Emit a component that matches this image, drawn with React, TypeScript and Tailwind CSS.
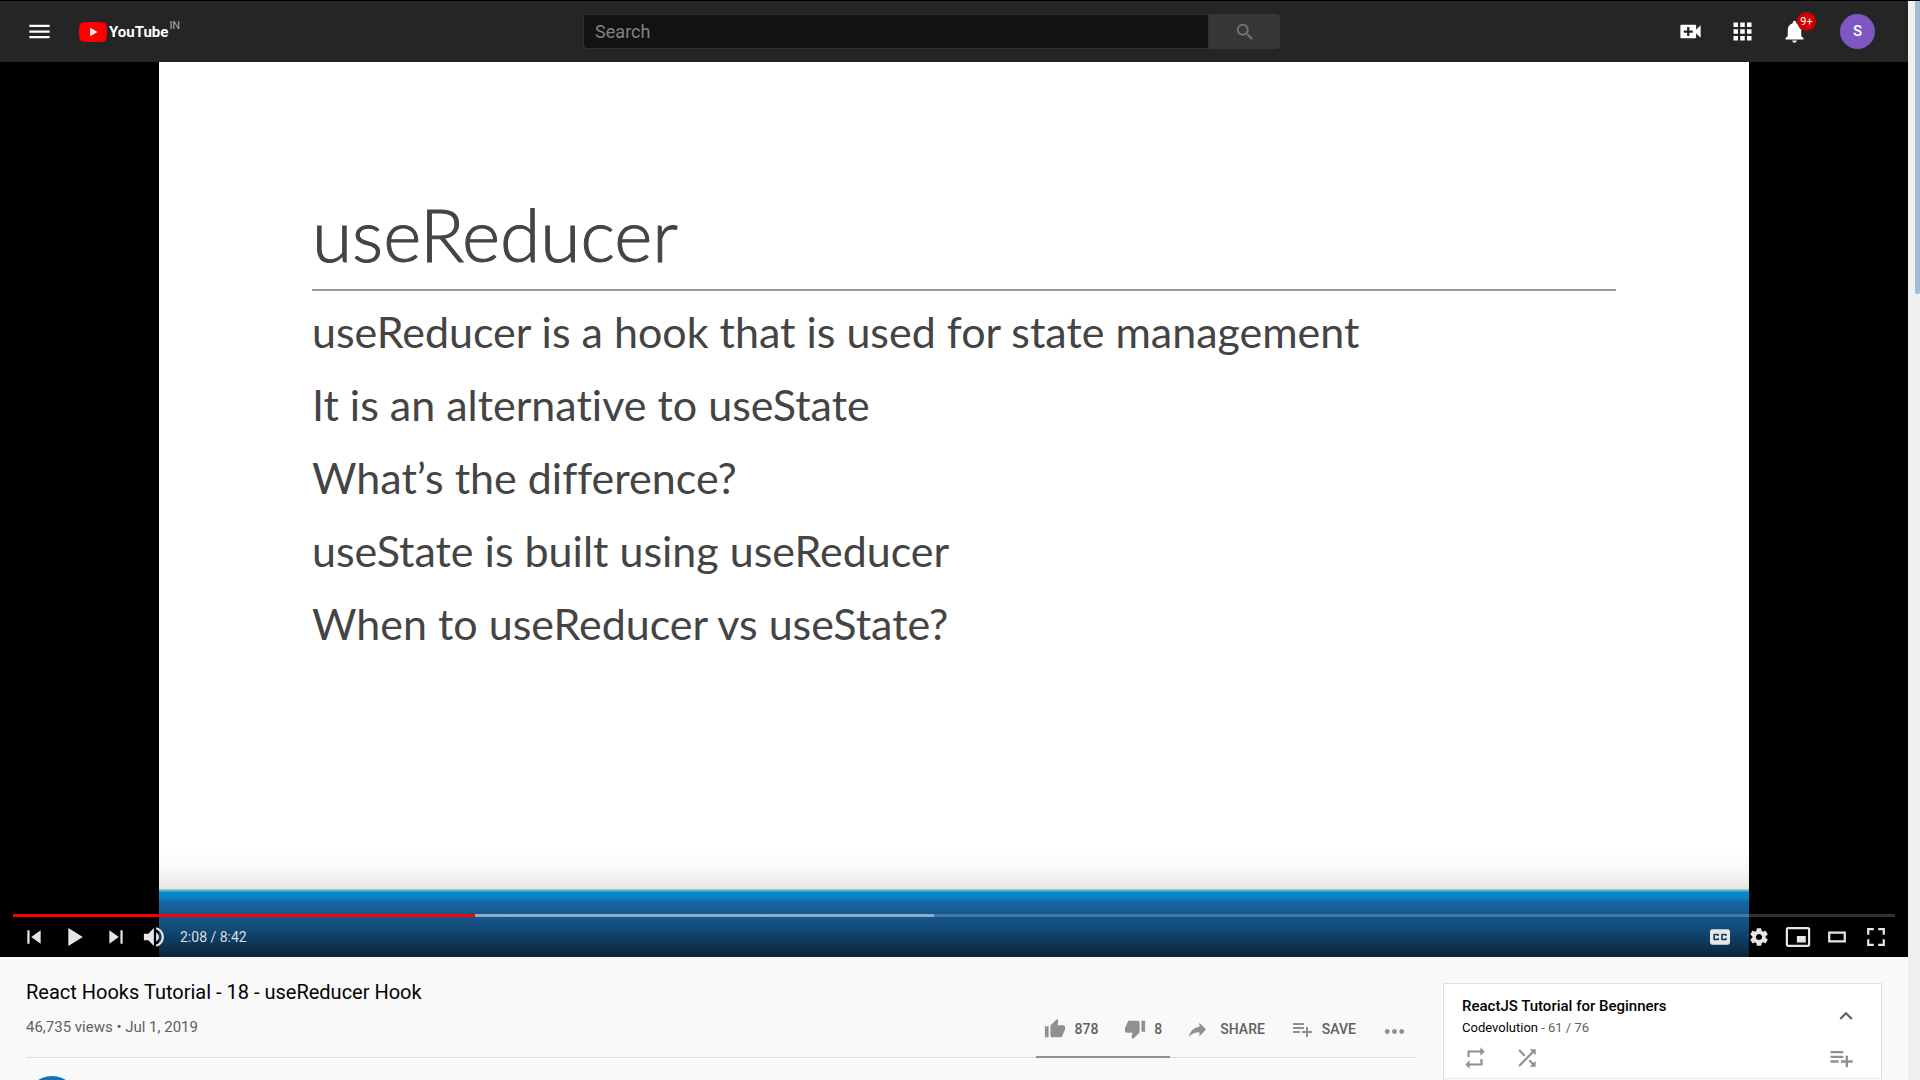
import type { ReactNode } from "react";
import {
  MdApps,
  MdKeyboardArrowUp,
  MdMenu,
  MdMoreHoriz,
  MdNotifications,
  MdPlaylistAdd,
  MdRepeat,
  MdSearch,
  MdShuffle,
  MdThumbDown,
  MdThumbUp,
  MdVideoCall,
} from "react-icons/md";

const BODY_LINES = [
  "useReducer is a hook that is used for state management",
  "It is an alternative to useState",
  "What’s the difference?",
  "useState is built using useReducer",
  "When to useReducer vs useState?",
];

const PLAYED = 24.55;
const LOADED = 48.95;

const LEFT_CONTROLS = [
  { label: "Previous", d: "M12 12h2v12h-2zM15.5 18l8.5 6V12z" },
  { label: "Play", d: "M12 26V10l13 8z" },
  { label: "Next", d: "M12 24l8.5-6L12 12zM22 12v12h2V12z" },
];

const VOLUME =
  "M8 21h4l5 5V10l-5 5H8zM19 14v8c1.48-.68 2.5-2.23 2.5-4 0-1.74-1.02-3.26-2.5-4zM19 11.29c2.89.86 5 3.54 5 6.71s-2.11 5.85-5 6.71v2.06c4.01-.91 7-4.49 7-8.77s-2.99-7.86-7-8.77z";

const RIGHT_CONTROLS = [
  {
    label: "Subtitles",
    d: "M11 11c-1.11 0-2 .9-2 2v10c0 1.1.89 2 2 2h14c1.1 0 2-.9 2-2V13c0-1.1-.9-2-2-2zM17 17h-1.5v-.5h-2v3h2V19H17v1c0 .55-.45 1-1 1h-3c-.55 0-1-.45-1-1v-4c0-.55.45-1 1-1h3c.55 0 1 .45 1 1zM24 17h-1.5v-.5h-2v3h2V19H24v1c0 .55-.45 1-1 1h-3c-.55 0-1-.45-1-1v-4c0-.55.45-1 1-1h3c.55 0 1 .45 1 1z",
  },
  {
    label: "Settings",
    d: "m 23.94,18.78 c .03,-0.25 .05,-0.51 .05,-0.78 0,-0.27 -0.02,-0.52 -0.05,-0.78 l 1.68,-1.32 c .15,-0.12 .19,-0.33 .09,-0.51 l -1.6,-2.76 c -0.09,-0.17 -0.31,-0.24 -0.48,-0.17 l -1.99,.8 c -0.41,-0.32 -0.86,-0.58 -1.35,-0.78 l -0.30,-2.12 c -0.02,-0.19 -0.19,-0.33 -0.39,-0.33 l -3.2,0 c -0.2,0 -0.36,.14 -0.39,.33 l -0.30,2.12 c -0.48,.2 -0.93,.47 -1.35,.78 l -1.99,-0.8 c -0.18,-0.07 -0.39,0 -0.48,.17 l -1.6,2.76 c -0.10,.17 -0.05,.39 .09,.51 l 1.68,1.32 c -0.03,.25 -0.05,.52 -0.05,.78 0,.26 .02,.52 .05,.78 l -1.68,1.32 c -0.15,.12 -0.19,.33 -0.09,.51 l 1.6,2.76 c .09,.17 .31,.24 .48,.17 l 1.99,-0.8 c .41,.32 .86,.58 1.35,.78 l .30,2.12 c .02,.19 .19,.33 .39,.33 l 3.2,0 c .2,0 .36,-0.14 .39,-0.33 l .30,-2.12 c .48,-0.2 .93,-0.47 1.35,-0.78 l 1.99,.8 c .18,.07 .39,0 .48,-0.17 l 1.6,-2.76 c .09,-0.17 .05,-0.39 -0.09,-0.51 l -1.68,-1.32 z m -5.94,2.01 c -1.54,0 -2.8,-1.25 -2.8,-2.8 0,-1.54 1.25,-2.8 2.8,-2.8 1.54,0 2.8,1.25 2.8,2.8 0,1.54 -1.25,2.8 -2.8,2.8 z",
  },
  {
    label: "Miniplayer",
    d: "M25 17h-8v6h8zM29 25V10.98C29 9.88 28.1 9 27 9H9c-1.1 0-2 .88-2 1.98V25c0 1.1.9 2 2 2h18c1.1 0 2-.9 2-2zm-2 .02H9V10.97h18z",
  },
  { label: "Default view", d: "M26 13v10H10V13zM12 15h12v6H12z" },
  {
    label: "Full screen",
    d: "M10 16h2v-4h4v-2h-6zM20 10v2h4v4h2v-6zM24 24h-4v2h6v-6h-2zM12 20h-2v6h6v-2h-4z",
  },
];

function PlayerButton({ label, d, className }: { label: string; d: string; className: string }) {
  return (
    <button aria-label={label} className={`flex h-10 items-center justify-center ${className}`}>
      <svg viewBox="0 0 36 36" className="h-10 w-10 shrink-0" fill="#e6e6e6" fillRule="evenodd">
        <path d={d} />
      </svg>
    </button>
  );
}

function Header() {
  return (
    <header className="flex h-[61px] items-center justify-between bg-[#252525] pr-[33px] pl-[26px] text-white">
      <div className="flex items-center">
        <button aria-label="Guide">
          <MdMenu size={27} />
        </button>
        <a href="#home" className="ml-[26px] flex items-center pr-1.5">
          <svg viewBox="0 0 28 20" className="h-5 w-7" aria-hidden="true">
            <path
              fill="#f00"
              d="M27.4 3.1A3.5 3.5 0 0 0 24.9.6C22.7 0 14 0 14 0S5.3 0 3.1.6A3.5 3.5 0 0 0 .6 3.1C0 5.3 0 10 0 10s0 4.7.6 6.9a3.5 3.5 0 0 0 2.5 2.5C5.3 20 14 20 14 20s8.7 0 10.9-.6a3.5 3.5 0 0 0 2.5-2.5C28 14.700 28 10 28 10s0-4.700-.6-6.900z"
            />
            <path fill="#fff" d="M11.2 14.3V5.7l7.3 4.3z" />
          </svg>
          <span className="ml-0.5 text-[15px] leading-5 font-bold">YouTube</span>
          <span className="mb-3 ml-px text-[11px] leading-3 text-[#aaaaaa]">IN</span>
        </a>
      </div>
      <form className="flex h-[35px] w-[697px]" onSubmit={(e) => e.preventDefault()}>
        <input
          type="text"
          aria-label="Search"
          placeholder="Search"
          className="min-w-0 flex-1 rounded-l-sm border border-[#303030] bg-[#121212] px-[11px] text-lg leading-6 placeholder:text-[#828282]"
        />
        <button
          aria-label="Submit search"
          className="flex w-[71px] items-center justify-center rounded-r-sm bg-[#373737] text-[#757575]"
        >
          <MdSearch size={22} />
        </button>
      </form>
      <div className="flex items-center">
        <button aria-label="Create">
          <MdVideoCall size={27} />
        </button>
        <button aria-label="Apps" className="ml-[25px]">
          <MdApps size={27} />
        </button>
        <button aria-label="Notifications" className="relative ml-[25px]">
          <MdNotifications size={27} />
          <span className="absolute -top-1.5 left-4 flex h-[19px] w-[19px] items-center justify-center rounded-full bg-[#cc0000] text-[11px] leading-4">
            9+
          </span>
        </button>
        <button
          aria-label="Account"
          className="ml-8 flex h-[35px] w-[35px] items-center justify-center rounded-full bg-[#7e57c2] text-[15px] font-medium"
        >
          S
        </button>
      </div>
    </header>
  );
}

function Slide() {
  return (
    <div className="mx-auto flex aspect-[1590/895] w-5/6 flex-col justify-between bg-white font-['Lato',sans-serif] text-[#444444] [font-variant-ligatures:none]">
      <div className="pt-[130px] pr-[133px] pl-[153px]">
        <h2 className="text-[73px] leading-[84px] font-light [-webkit-text-stroke:1px_#444444]">useReducer</h2>
        <hr className="mt-[13px] h-0.5 border-0 bg-[#9a9a9a]" />
        <div className="mt-1 text-[43px] leading-[73px]">
          {BODY_LINES.map((line) => (
            <p key={line}>{line}</p>
          ))}
        </div>
      </div>
      <div>
        <div className="h-10 bg-linear-to-b from-white via-[#f8f8f8] to-[#e6e6e0]" />
        <div className="h-[3px] bg-linear-to-b from-[#a5d5e8] to-[#2a8cb4]" />
        <div className="h-[9px] bg-linear-to-b from-[#0289c7] via-[#0289c7] to-[#1470ae]" />
        <div className="h-14 bg-linear-to-b from-[#1766a5] via-[#124a78] to-[#08253b]" />
      </div>
    </div>
  );
}

function Player() {
  return (
    <section className="relative bg-black">
      <Slide />
      <div className="absolute inset-x-0 bottom-0 px-[13px]">
        <div
          role="progressbar"
          aria-label="Playback"
          aria-valuenow={128}
          aria-valuemax={522}
          className="flex h-[3px] bg-white/20"
        >
          <div className="bg-[#ff0000]" style={{ width: `${PLAYED}%` }} />
          <div className="bg-white/40" style={{ width: `${LOADED - PLAYED}%` }} />
        </div>
        <div className="flex h-10 items-center justify-between">
          <div className="flex items-center">
            {LEFT_CONTROLS.map((c) => (
              <PlayerButton key={c.label} label={c.label} d={c.d} className="w-[41px]" />
            ))}
            <PlayerButton label="Mute" d={VOLUME} className="w-[37px]" />
            <span className="ml-[7px] text-sm text-[#dddddd]">2:08 / 8:42</span>
          </div>
          <div className="flex items-center">
            {RIGHT_CONTROLS.map((c) => (
              <PlayerButton key={c.label} label={c.label} d={c.d} className="w-[39px]" />
            ))}
          </div>
        </div>
      </div>
    </section>
  );
}

function Action({ icon, text, className }: { icon: ReactNode; text: string; className: string }) {
  return (
    <button className={`flex items-center pb-1 text-sm font-medium text-[#606060] ${className}`}>
      <span className="text-[#909090]">{icon}</span>
      {text}
    </button>
  );
}

function Primary() {
  return (
    <div className="min-w-0 flex-1">
      <h1 className="text-xl leading-[26px] text-[#030303]">React Hooks Tutorial - 18 - useReducer Hook</h1>
      <div className="flex h-[53px] justify-between border-b border-[#dddddd]">
        <p className="self-center pb-2 text-[15px] leading-5 text-[#606060]">46,735 views • Jul 1, 2019</p>
        <div className="flex">
          <div className="-mb-px flex border-b-2 border-[#909090] px-2">
            <Action icon={<MdThumbUp size={22} />} text="878" className="gap-2" />
            <Action icon={<MdThumbDown size={22} />} text="8" className="ml-[26px] gap-2" />
          </div>
          <Action
            icon={
              <svg viewBox="0 0 24 24" width="23" height="23" fill="currentColor">
                <path d="M14 9V5l7 7-7 7v-4.1c-5 0-8.5 1.6-11 5.1 1-5 4-10 11-11z" />
              </svg>
            }
            text="SHARE"
            className="ml-4 gap-[11px]"
          />
          <Action icon={<MdPlaylistAdd size={24} />} text="SAVE" className="ml-[25px] gap-2" />
          <button aria-label="More actions" className="mr-2 ml-6 flex items-center text-[#909090]">
            <MdMoreHoriz size={29} />
          </button>
        </div>
      </div>
      <div className="mt-[18px] h-[52px] w-[52px] rounded-full bg-[#0d74bd]" />
    </div>
  );
}

function Playlist() {
  return (
    <aside className="mt-1 w-[439px] shrink-0 self-start border border-[#e0e0e0] bg-white">
      <div className="border-b border-[#eeeeee] pr-[22px] pl-[18px]">
        <div className="flex items-center justify-between pt-3">
          <div>
            <h3 className="text-[15px] leading-5 font-medium text-[#030303]">ReactJS Tutorial for Beginners</h3>
            <p className="mt-0.5 text-[13px] leading-5 text-[#606060]">
              <a href="#channel" className="text-[#030303]">
                Codevolution
              </a>{" "}
              - 61 / 76
            </p>
          </div>
          <button aria-label="Collapse" className="pb-0.5 text-[#606060]">
            <MdKeyboardArrowUp size={26} />
          </button>
        </div>
        <div className="flex h-10 items-center text-[#909090]">
          <button aria-label="Loop playlist">
            <MdRepeat size={26} />
          </button>
          <button aria-label="Shuffle playlist" className="ml-[26px]">
            <MdShuffle size={26} />
          </button>
          <button aria-label="Save playlist" className="mr-1 ml-auto">
            <MdPlaylistAdd size={28} />
          </button>
        </div>
      </div>
      <div className="h-40 bg-[#f9f9f9]" />
    </aside>
  );
}

export default function App() {
  return (
    <div className="flex h-screen overflow-hidden border-t border-black bg-[#f9f9f9] font-['Roboto',sans-serif]">
      <div className="min-w-0 flex-1">
        <Header />
        <Player />
        <main className="flex gap-[26px] px-[26px] pt-[22px]">
          <Primary />
          <Playlist />
        </main>
      </div>
      <div className="flex w-3 justify-end bg-[#f0f0f0]">
        <div className="h-[293px] w-[5px] rounded-b-xs bg-[#a0bdd8]" />
      </div>
    </div>
  );
}
